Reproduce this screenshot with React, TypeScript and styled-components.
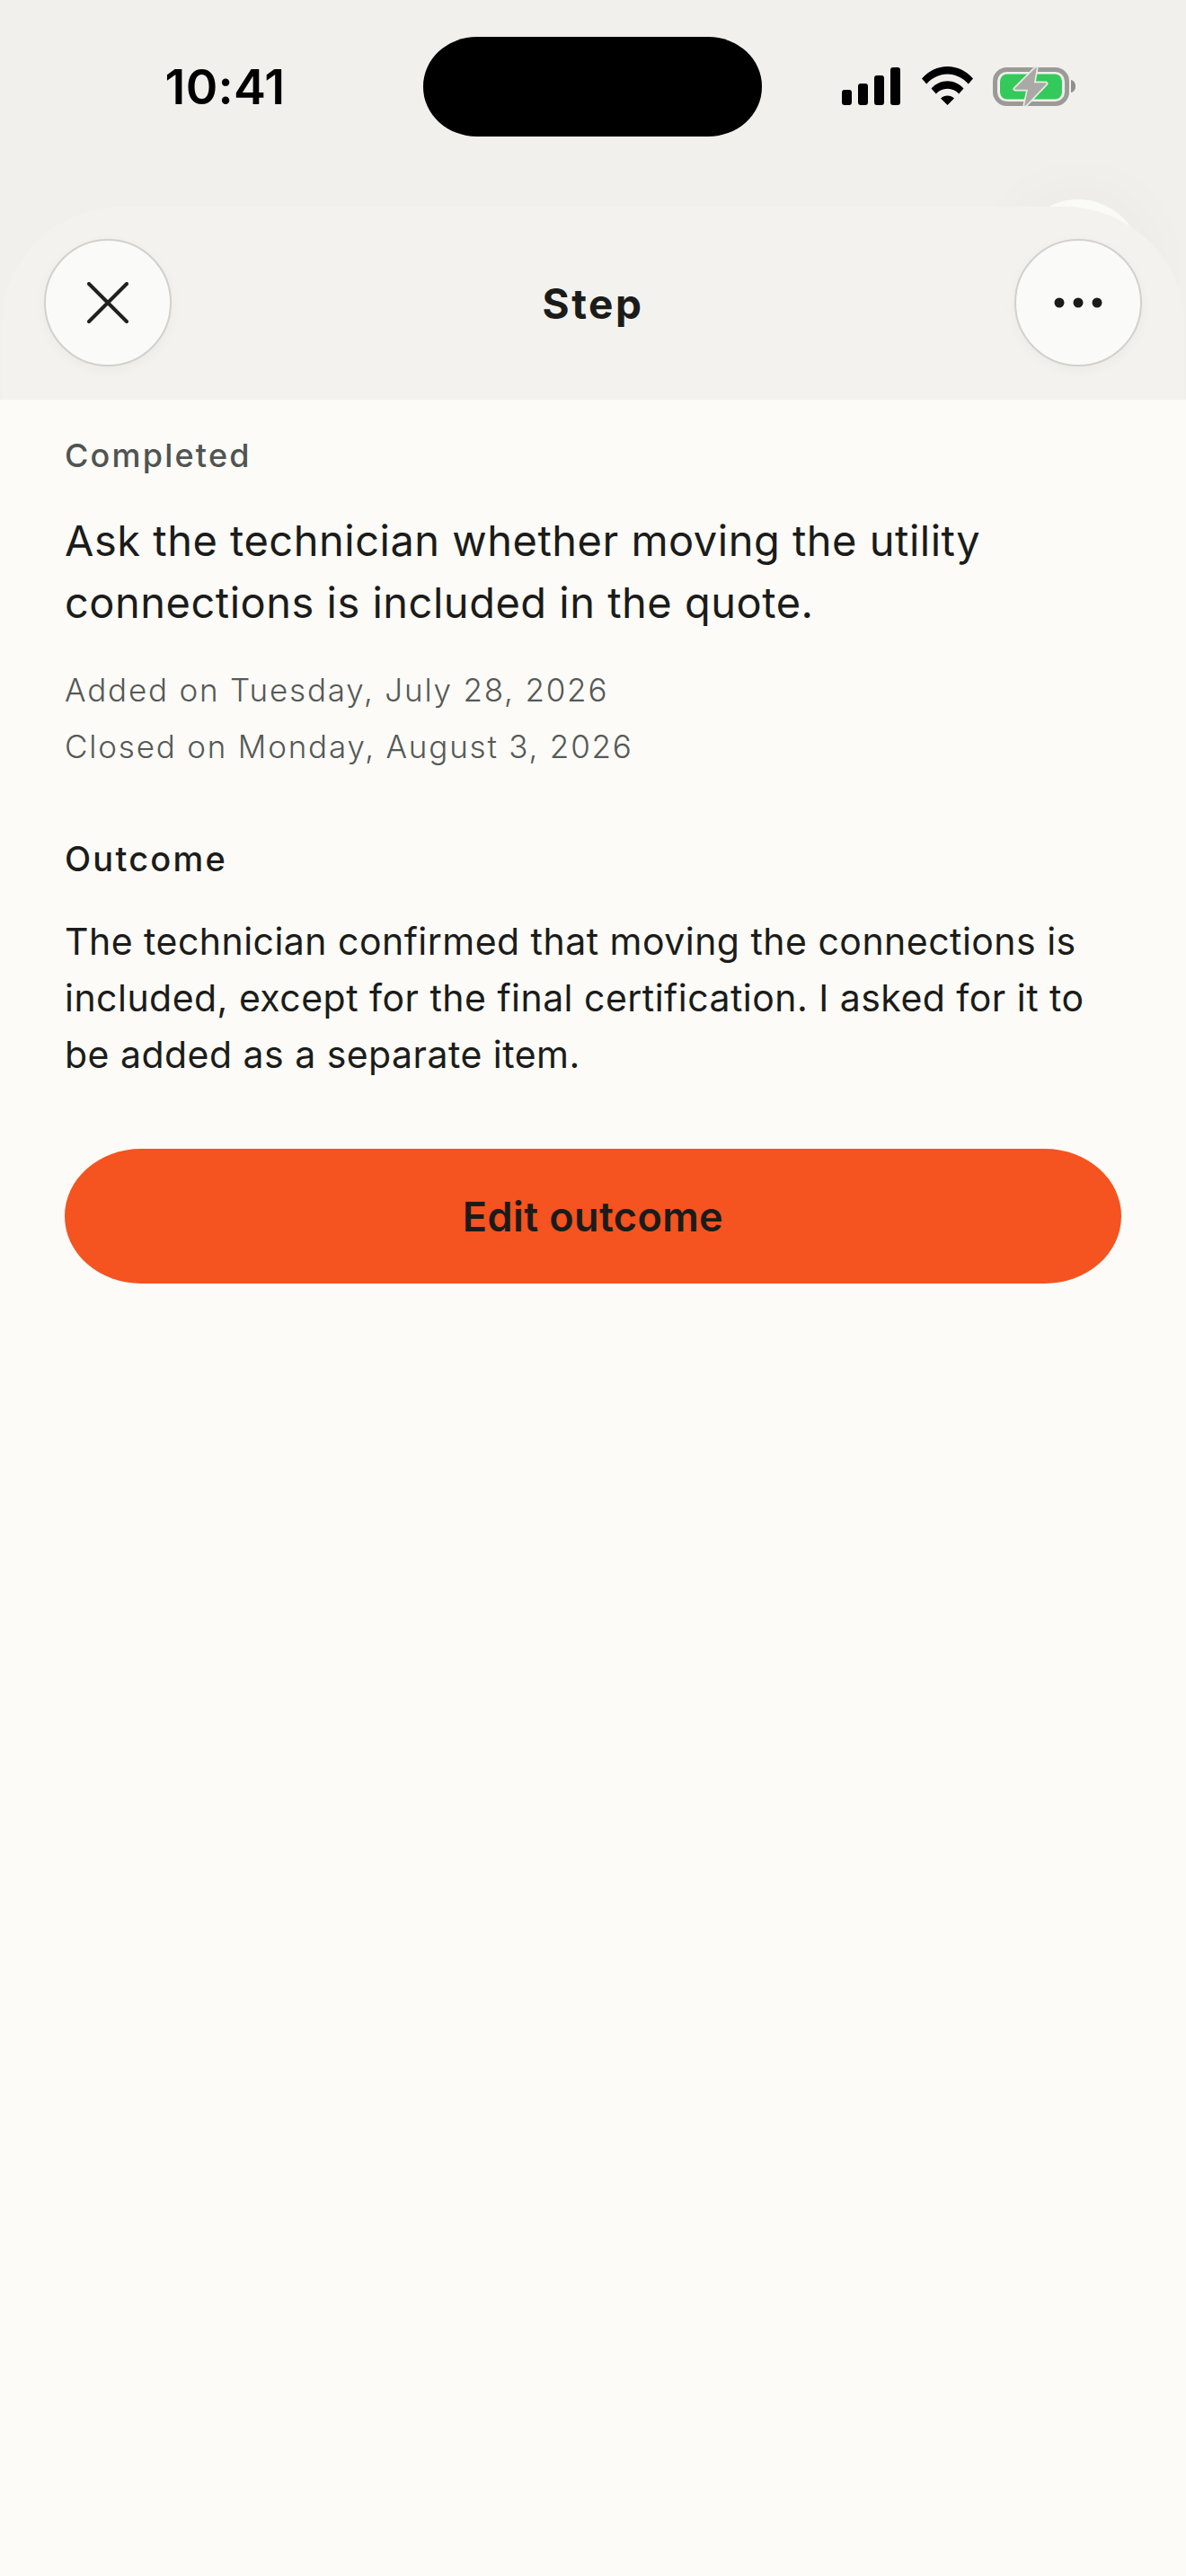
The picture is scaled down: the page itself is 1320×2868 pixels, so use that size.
import React from "react";
import styled, { createGlobalStyle } from "styled-components";

const Global = createGlobalStyle`
  html, body { margin: 0; padding: 0; background: #fcfbf7; }
  body { font-family: Inter, "Liberation Sans", sans-serif; -webkit-font-smoothing: antialiased; }
  * { box-sizing: border-box; }
`;

const Page = styled.div`
  width: 1320px;
  height: 2868px;
  background: #fcfbf7;
  overflow: hidden;
  display: flex;
  flex-direction: column;
`;
const Top = styled.div`
  position: relative;
  background: #f1f0ec;
  overflow: hidden;
  flex: none;
`;
const StatusBar = styled.div`
  height: 230px;
  padding-top: 41px;
  display: grid;
  grid-template-columns: 471px 377px 1fr;
  align-items: start;
`;
const Time = styled.div`
  height: 111px;
  padding-left: 30px;
  display: flex;
  align-items: center;
  justify-content: center;
  font-size: 54px;
  font-weight: 600;
  color: #000;
  letter-spacing: 0.2px;
`;
const Island = styled.div`
  height: 111px;
  background: #000;
  border-radius: 60px / 55px;
`;
const StatusIcons = styled.div`
  padding: 34px 0 0 89px;
  display: flex;
`;
const BehindButton = styled.div`
  position: absolute;
  left: 1129px;
  top: 222px;
  width: 142px;
  height: 142px;
  border-radius: 50%;
  background: #fafaf6;
  box-shadow: 0 0 60px 18px rgba(0, 0, 0, 0.025);
`;
const Sheet = styled.header`
  position: relative;
  margin: 0 2px;
  height: 215px;
  background: #f3f2ee;
  border-radius: 135px 135px 0 0 / 130px 130px 0 0;
  padding: 36px 47px 0;
  display: flex;
  justify-content: space-between;
  align-items: flex-start;
`;
const RoundButton = styled.button`
  width: 142px;
  height: 142px;
  padding: 0;
  border-radius: 50%;
  border: 2px solid #d2d1cd;
  background: #fafaf8;
  box-shadow: 0 4px 14px rgba(0, 0, 0, 0.035);
  display: flex;
  align-items: center;
  justify-content: center;
`;
const Title = styled.h1`
  margin: 0;
  align-self: flex-start;
  line-height: 144px;
  font-size: 46px;
  font-weight: 700;
  letter-spacing: 2.5px;
  color: #1b1c1a;
`;
const Body = styled.main`
  padding: 38px 72px 0;
`;
const Status = styled.div`
  font-size: 36px;
  line-height: 48px;
  font-weight: 500;
  letter-spacing: 2.2px;
  color: #505452;
`;
const Headline = styled.p`
  margin: 36px 0 0;
  font-size: 47px;
  line-height: 69px;
  font-weight: 400;
  letter-spacing: 0.5px;
  color: #1b1c1a;
`;
const Dates = styled.div`
  margin-top: 32px;
`;
const DateLine = styled.div`
  font-size: 35px;
  line-height: 63px;
  font-weight: 300;
  letter-spacing: 1.8px;
  color: #555957;
`;
const SectionLabel = styled.h2`
  margin: 65px 0 0;
  font-size: 38px;
  line-height: 56px;
  font-weight: 500;
  letter-spacing: 2.2px;
  color: #1b1c1a;
`;
const Outcome = styled.p`
  margin: 33px 0 0;
  font-size: 41px;
  line-height: 63px;
  font-weight: 400;
  letter-spacing: 0.47px;
  color: #1b1c1a;
`;
const PrimaryButton = styled.button`
  margin-top: 73px;
  width: 100%;
  height: 150px;
  border: 0;
  border-radius: 85px / 75px;
  background: #f5531f;
  color: #1b1c1a;
  font-family: inherit;
  font-size: 45px;
  font-weight: 600;
  letter-spacing: 0.4px;
`;

const Signal = () => (
  <svg width="66" height="42" viewBox="0 0 66 42" fill="#000">
    <rect x="0" y="25" width="11" height="17" rx="3" />
    <rect x="18" y="18" width="11" height="24" rx="3" />
    <rect x="36" y="9" width="11" height="33" rx="3" />
    <rect x="54" y="0" width="11" height="42" rx="3" />
  </svg>
);
const Wifi = () => (
  <svg width="57" height="43" viewBox="0 0 57 43" fill="#000" style={{ marginLeft: 23, marginTop: -1 }}>
    <path d="M0 13.5C7.5 5 17.5 0 28.5 0S49.5 5 57 13.5L51.8 19.5C45.5 12.5 37.5 8.5 28.5 8.5S11.5 12.5 5.2 19.5Z" />
    <path d="M10.5 24.5C15 19.5 21.5 16.3 28.5 16.3S42 19.5 46.5 24.5L41.2 30.5C38 27 33.5 24.8 28.5 24.8S19 27 15.8 30.5Z" />
    <path d="M21 35.5C23 33.5 25.5 32.5 28.5 32.5S34 33.5 36 35.5L28.5 43Z" />
  </svg>
);
const Battery = () => (
  <svg width="92" height="47" viewBox="0 0 92 47" fill="none" style={{ marginLeft: 22, marginTop: -3 }}>
    <rect x="2.5" y="5.5" width="80" height="38" rx="13" stroke="#9a9a96" strokeWidth="5" />
    <rect x="8" y="10.5" width="69" height="28" rx="8" fill="#34c95b" />
    <path d="M87 17C90 17.5 92 20 92 24S90 30.5 87 31Z" fill="#8f8f8b" />
    <path
      d="M48 4 25 27H40L36 45 59 21H45Z"
      fill="#a9a9a5"
      stroke="#e9e9e5"
      strokeWidth="5"
      strokeLinejoin="round"
      paintOrder="stroke"
    />
    <path d="M48 4 25 27H40L36 45 59 21H45Z" fill="#a9a9a5" stroke="#a9a9a5" strokeWidth="1.5" strokeLinejoin="round" />
  </svg>
);
const CloseIcon = () => (
  <svg width="46" height="46" viewBox="0 0 46 46" fill="none" stroke="#20201e" strokeWidth="4" strokeLinecap="round">
    <path d="M2 2 44 44M44 2 2 44" />
  </svg>
);
const DotsIcon = () => (
  <svg width="54" height="12" viewBox="0 0 54 12" fill="#1b1c1a">
    <circle cx="6" cy="6" r="5.5" />
    <circle cx="27" cy="6" r="5.5" />
    <circle cx="48" cy="6" r="5.5" />
  </svg>
);

export default function App() {
  return (
    <Page>
      <Global />
      <Top>
        <StatusBar>
          <Time>10:41</Time>
          <Island />
          <StatusIcons>
            <Signal />
            <Wifi />
            <Battery />
          </StatusIcons>
        </StatusBar>
        <BehindButton />
        <Sheet>
          <RoundButton aria-label="Close">
            <CloseIcon />
          </RoundButton>
          <Title>Step</Title>
          <RoundButton aria-label="More">
            <DotsIcon />
          </RoundButton>
        </Sheet>
      </Top>
      <Body>
        <Status>Completed</Status>
        <Headline>Ask the technician whether moving the utility connections is included in the quote.</Headline>
        <Dates>
          <DateLine>Added on Tuesday, July 28, 2026</DateLine>
          <DateLine>Closed on Monday, August 3, 2026</DateLine>
        </Dates>
        <SectionLabel>Outcome</SectionLabel>
        <Outcome>
          The technician confirmed that moving the connections is included, except for the final certification. I asked
          for it to be added as a separate item.
        </Outcome>
        <PrimaryButton>Edit outcome</PrimaryButton>
      </Body>
    </Page>
  );
}
